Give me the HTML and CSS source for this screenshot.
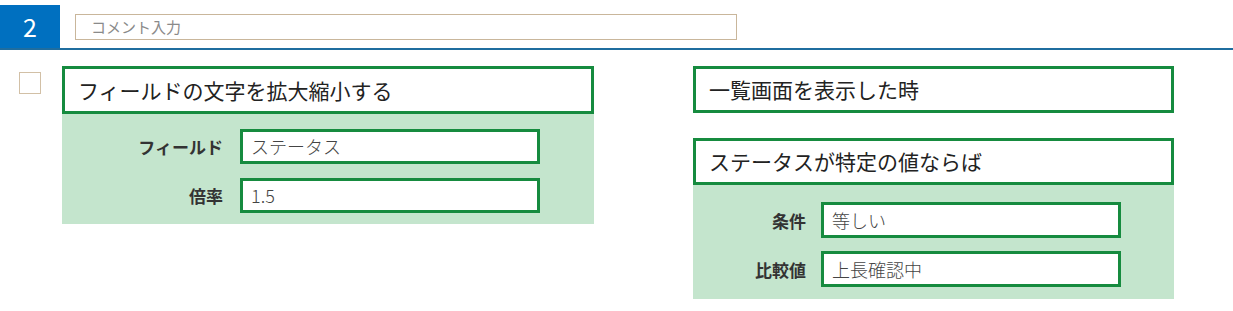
FILE: index.html
```html
<!DOCTYPE html>
<html>
<head>
  <title>rule 2</title>
  <meta charset="utf-8">
  <meta name="viewport" content="width=device-width, initial-scale=1">
  <link rel="stylesheet" href="styles.css">
</head>
<body>

  <div class="header">
    <div class="rule-no">2</div>
    <input class="comment" type="text" placeholder="コメント入力">
  </div>

  <div class="main">
    <div class="check"></div>

    <!-- action -->
    <div class="card card-left">
      <div class="card-title">フィールドの文字を拡大縮小する</div>
      <div class="panel">
        <div class="field-row">
          <div class="label">フィールド</div>
          <div class="value">ステータス</div>
        </div>
        <div class="field-row">
          <div class="label">倍率</div>
          <div class="value">1.5</div>
        </div>
      </div>
    </div>

    <!-- triggers -->
    <div class="right-col">
      <div class="card">
        <div class="card-title">一覧画面を表示した時</div>
      </div>
      <div class="card card-right">
        <div class="card-title">ステータスが特定の値ならば</div>
        <div class="panel">
          <div class="field-row">
            <div class="label">条件</div>
            <div class="value">等しい</div>
          </div>
          <div class="field-row">
            <div class="label">比較値</div>
            <div class="value">上長確認中</div>
          </div>
        </div>
      </div>
    </div>
  </div>

</body>
</html>
```

FILE: styles.css
```css
* {
  box-sizing: border-box;
}
body {
  margin: 0;
  padding: 0;
  background-color: #ffffff;
  color: #222222;
  font-family: "Noto Sans CJK JP", "Noto Sans", sans-serif;
}

/* top bar with rule number */
.header {
  display: flex;
  align-items: center;
  padding-top: 5px;
  border-bottom: 2px solid #1f6d9f;
}
.rule-no {
  width: 60px;
  height: 43px;
  background-color: #0070c0;
  color: #ffffff;
  font-size: 25px;
  line-height: 43px;
  text-align: center;
}
.comment {
  width: 662px;
  height: 26px;
  margin-left: 15px;
  padding: 0 15px;
  border: 1px solid #c9b69b;
  font-family: "Noto Sans CJK JP", sans-serif;
  font-size: 15px;
  color: #555555;
  outline: none;
}
.comment::placeholder {
  color: #8a8a8a;
}

.main {
  display: flex;
  align-items: flex-start;
  padding-top: 16px;
}
.check {
  width: 22px;
  height: 22px;
  margin-left: 19px;
  margin-top: 6px;
  border: 1px solid #d2c0a6;
}

/* cards */
.card-title {
  height: 48px;
  padding-left: 13px;
  border: 3px solid #168b3f;
  background-color: #ffffff;
  font-size: 21px;
  line-height: 42px;
  color: #222222;
}
.card-left {
  width: 532px;
  margin-left: 21px;
}
.right-col {
  display: flex;
  flex-direction: column;
  gap: 25px;
  width: 481px;
  margin-left: 99px;
}
.right-col .card-title {
  height: 47px;
  line-height: 41px;
}
.panel {
  display: flex;
  flex-direction: column;
  gap: 14px;
  padding: 15px 0 11px 0;
  background-color: #c4e5cd;
}
.card-right .panel {
  gap: 13px;
  padding: 17px 0 12px 0;
}
.field-row {
  display: flex;
  align-items: center;
}
.label {
  width: 178px;
  padding-right: 17px;
  text-align: right;
  font-size: 17px;
  font-weight: bold;
  color: #333333;
}
.card-right .label {
  width: 128px;
  padding-right: 15px;
}
.value {
  width: 300px;
  height: 35px;
  padding-left: 8px;
  border: 3px solid #168b3f;
  background-color: #ffffff;
  font-size: 18px;
  font-weight: 300;
  line-height: 29px;
  color: #444444;
}
.card-right .value {
  height: 36px;
  line-height: 30px;
}
```
